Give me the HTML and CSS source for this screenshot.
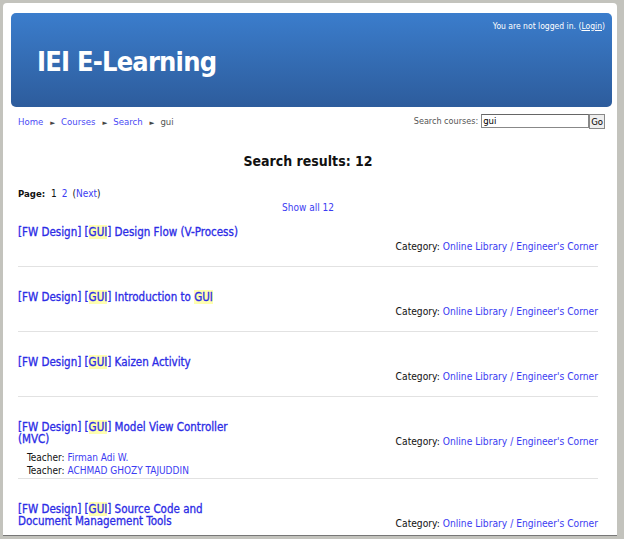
FILE: index.html
```html
<!DOCTYPE html>
<html>
<head>
<meta charset="utf-8">
<link rel="stylesheet" href="styles.css">
</head>
<body>
<div class="page">
  <div class="header">
    <div class="login">You are not logged in. (<a href="#">Login</a>)</div>
    <h1 class="site-title">IEI E-Learning</h1>
  </div>
  <div class="navbar">
    <div class="crumbs">
      <a href="#">Home</a><span class="sep">&#9658;</span><a href="#">Courses</a><span class="sep">&#9658;</span><a href="#">Search</a><span class="sep">&#9658;</span><span class="current">gui</span>
    </div>
    <form class="search">
      <label class="search-label">Search courses:</label><span class="search-input">gui</span><span class="go">Go</span>
    </form>
  </div>
  <div class="content">
    <h2 class="results">Search results: 12</h2>
    <div class="paging"><span class="plabel">Page:</span><span class="cur">1</span><a href="#">2</a><span class="next">(<a href="#">Next</a>)</span></div>
    <div class="showall"><a href="#">Show all 12</a></div>

    <div class="course first">
      <div class="info"><a class="name" href="#">[FW Design] [<span class="hl">GUI</span>] Design Flow (V-Process)</a></div>
      <div class="cat">Category: <a href="#">Online Library / Engineer's Corner</a></div>
    </div>
    <div class="course">
      <div class="info"><a class="name" href="#">[FW Design] [<span class="hl">GUI</span>] Introduction to <span class="hl">GUI</span></a></div>
      <div class="cat">Category: <a href="#">Online Library / Engineer's Corner</a></div>
    </div>
    <div class="course">
      <div class="info"><a class="name" href="#">[FW Design] [<span class="hl">GUI</span>] Kaizen Activity</a></div>
      <div class="cat">Category: <a href="#">Online Library / Engineer's Corner</a></div>
    </div>
    <div class="course">
      <div class="info">
        <a class="name" href="#">[FW Design] [<span class="hl">GUI</span>] Model View Controller (MVC)</a>
        <ul class="teachers">
          <li>Teacher: <a href="#">Firman Adi W.</a></li>
          <li>Teacher: <a href="#">ACHMAD GHOZY TAJUDDIN</a></li>
        </ul>
      </div>
      <div class="cat">Category: <a href="#">Online Library / Engineer's Corner</a></div>
    </div>
    <div class="course">
      <div class="info"><a class="name" href="#">[FW Design] [<span class="hl">GUI</span>] Source Code and Document Management Tools</a></div>
      <div class="cat">Category: <a href="#">Online Library / Engineer's Corner</a></div>
    </div>
  </div>
</div>
</body>
</html>
```
FILE: styles.css
```css
html, body {
  margin: 0;
  padding: 0;
  height: 100%;
  overflow: hidden;
}
body {
  background: #c3c3bd;
  font-family: "DejaVu Sans Condensed", "DejaVu Sans", sans-serif;
  color: #222;
}
a { color: #3c3cf2; text-decoration: none; }
.page {
  margin: 3px 7px 0 3px;
  height: 533px;
  background: #fff;
  border-radius: 4px 4px 0 0;
  padding: 10px 5px 0 8px;
  box-sizing: border-box;
  overflow: hidden;
  border-bottom: 1px solid #777;
}
.header {
  height: 94px;
  box-sizing: border-box;
  border-radius: 5px;
  background: linear-gradient(#3b7dcc, #2d5c9c);
  padding: 7px 7px 0 26px;
  display: flex;
  flex-direction: column;
}
.login {
  align-self: flex-end;
  color: #fff;
  font-size: 8.5px;
  line-height: 12px;
}
.login a { color: #fff; text-decoration: underline; }
.site-title {
  margin: 13px 0 0 0;
  color: #fff;
  font-size: 27px;
  letter-spacing: -0.8px;
  font-weight: bold;
  line-height: 34px;
}
.navbar {
  display: flex;
  justify-content: space-between;
  align-items: center;
  height: 14px;
  margin-top: 7px;
  padding: 0 7px;
  font-size: 9.5px;
}
.crumbs a { color: #4a4af5; }
.sep { color: #444; font-size: 7px; margin: 0 6px 0 7px; }
.current { color: #555; }
.search { display: flex; align-items: center; margin: 0; }
.search-label { color: #555; margin-right: 3px; font-size: 9px; }
.search-input {
  width: 104px;
  height: 12px;
  border: 1px solid #888;
  border-top-color: #666;
  line-height: 12px;
  padding: 0 1px;
  color: #000;
  font-size: 9.5px;
}
.go {
  height: 13px;
  border: 1px solid #888;
  background: #eee;
  color: #000;
  line-height: 13px;
  padding: 0 1px;
  font-size: 9.5px;
}
.content {
  padding: 0 14px 0 7px;
}
.results {
  text-align: center;
  font-size: 14px;
  font-weight: bold;
  color: #111;
  margin: 23px 0 0 0;
  line-height: 20px;
}
.paging {
  margin-top: 16px;
  font-size: 10px;
  line-height: 14px;
  color: #111;
}
.plabel { font-weight: bold; font-size: 9.5px; }
.paging .cur { margin: 0 5px 0 6px; }
.paging a { color: #3c3cf2; }
.paging .next { margin-left: 5px; }
.showall {
  text-align: center;
  font-size: 10px;
  line-height: 14px;
}
.course {
  display: flex;
  justify-content: space-between;
  border-bottom: 1px solid #e2e2e2;
  padding: 24px 0 1px 0;
}
.course.first { padding-top: 11px; }
.info { width: 236px; }
.name {
  display: block;
  font-size: 11.5px;
  line-height: 12px;
  color: #2c2ce6;
  -webkit-text-stroke: 0.3px #2c2ce6;
}
.hl { background: #ffffb0; }
.teachers {
  list-style: none;
  margin: 6px 0 0 9px;
  padding: 0;
  font-size: 10px;
  line-height: 13px;
}
.teachers li { color: #111; height: 13px; }
.cat {
  padding-top: 14px;
  margin-bottom: 11px;
  font-size: 10.2px;
  line-height: 14px;
  white-space: nowrap;
  color: #111;
}
```
